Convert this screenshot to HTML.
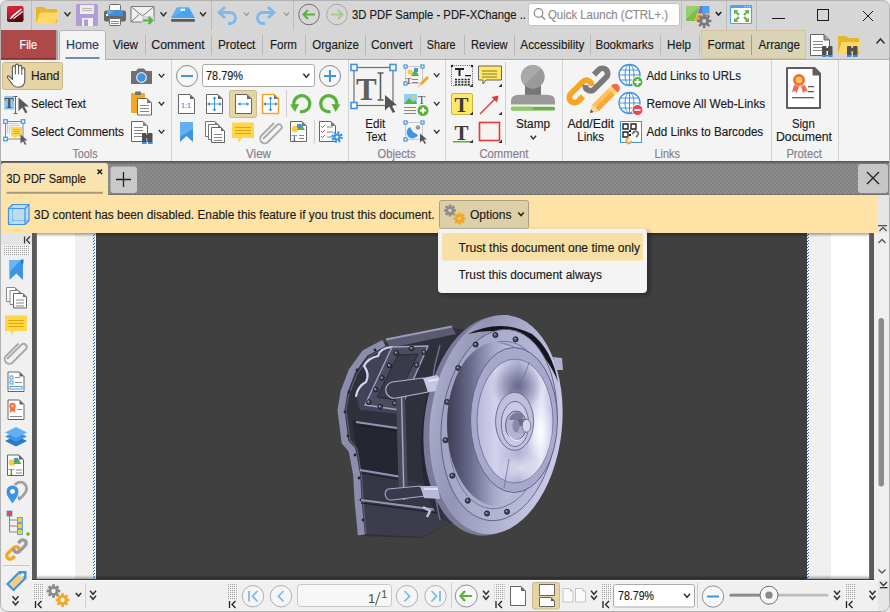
<!DOCTYPE html>
<html><head><meta charset="utf-8"><title>PDF-XChange</title>
<style>
*{margin:0;padding:0}
html,body{width:890px;height:612px;overflow:hidden;background:#d6d6d6}
svg{display:block}
text{font-family:"Liberation Sans",sans-serif;white-space:pre}
text.sf{font-family:"Liberation Serif",serif}
</style></head><body>
<svg width="890" height="612" viewBox="0 0 890 612">
<!-- titlebar -->
<rect x="0" y="0" width="890" height="60" fill="#d6d6d6" />
<rect x="0" y="0" width="890" height="1" fill="#c4c4c4"/>
<defs><linearGradient id="appg" x1="0" y1="0" x2="0.3" y2="1"><stop offset="0" stop-color="#d8283a"/><stop offset="0.45" stop-color="#a8141f"/><stop offset="1" stop-color="#4e070c"/></linearGradient></defs>
<rect x="7" y="6" width="16.5" height="16" fill="url(#appg)" rx="2" />
<path d="M7.5 6.5 H23 V9 L13 17 L7.5 20 Z" fill="#dc2a3a" opacity="0.6"/>
<path d="M10 19 L11.5 16 L21 8.5 L22 9.5 L12.8 17.2 Z" fill="#fff"/>
<path d="M13 18.2 L22.5 10.8 L23 12 L14 19 Z" fill="#fff" opacity="0.9"/>
<path d="M10 19.5 L11.5 16 L13 17.8 Z" fill="#fff"/>
<rect x="31" y="1" width="1" height="29" fill="#bdbdbd"/>
<path d="M36 7 h8 l2 2 h11 v14 h-21 z" fill="#e8b52b"/>
<path d="M36 23.5 L40 12.5 H59 L55 23.5 Z" fill="#ffd866"/>
<path d="M64.5 12.25 L67.5 15.75 L70.5 12.25" fill="none" stroke="#333" stroke-width="1.5"/>
<rect x="76" y="4" width="22" height="22" fill="#b39bd8" rx="1.5" />
<rect x="80" y="5" width="14" height="9" fill="#ececec" />
<rect x="82" y="8" width="10" height="1" fill="#b9b9b9"/>
<rect x="82" y="10" width="10" height="1" fill="#b9b9b9"/>
<rect x="82" y="18" width="11" height="8" fill="#f0f0f0" />
<rect x="84" y="19.5" width="4" height="6.5" fill="#b39bd8" />
<rect x="109.5" y="4.5" width="11" height="6" fill="#fafafa" rx="1" stroke="#6a6a6a" stroke-width="1" />
<rect x="104" y="10.5" width="22" height="11" fill="#686868" rx="2" />
<rect x="107" y="10.5" width="16" height="5.5" fill="#5aabf0" />
<path d="M107 16 L115 10.5 H123 V16 Z" fill="#3d8fe0"/>
<rect x="106" y="14" width="2" height="2" fill="#f0f0f0" />
<rect x="109.5" y="18.5" width="11" height="7" fill="#fafafa" rx="1" stroke="#6a6a6a" stroke-width="1" />
<rect x="111" y="21" width="8" height="1" fill="#4d9be6"/>
<rect x="111" y="23" width="8" height="1" fill="#4d9be6"/>
<rect x="131" y="6.5" width="23" height="15.5" fill="#f0f0f0" rx="1" stroke="#7a7a7a" stroke-width="1.1" />
<path d="M131.5 7 L142.5 16 L153.5 7 M131.5 21.5 L139 14.5" fill="none" stroke="#7a7a7a" stroke-width="1"/>
<rect x="142" y="16" width="12" height="7" fill="#d6d6d6" />
<path d="M143 20.5 h9 M148.5 17 l3.5 3.5 l-3.5 3.5" fill="none" stroke="#55b33b" stroke-width="2.2"/>
<path d="M160.5 12.25 L163.5 15.75 L166.5 12.25" fill="none" stroke="#333" stroke-width="1.5"/>
<path d="M171 18 L177 7.5 H189 L195 18 Z" fill="#4aa3ef"/>
<path d="M171 18 L177 7.5 H189 Z" fill="#5fb2f5"/>
<rect x="180.5" y="8.8" width="4.5" height="2" fill="#ffffff" />
<rect x="171" y="19" width="24" height="2.8" fill="#5a5a5a" rx="1.2" />
<path d="M200.0 12.25 L203 15.75 L206.0 12.25" fill="none" stroke="#333" stroke-width="1.5"/>
<rect x="211" y="1" width="1" height="29" fill="#bdbdbd"/>
<path d="M225 7 L219 12.5 L225 18 M219.5 12.5 H230 a5.5 5.5 0 0 1 0 11 h-2" fill="none" stroke="#7db9ea" stroke-width="2.8"/>
<path d="M244.0 12.5 L246.5 15.5 L249.0 12.5" fill="none" stroke="#9a9a9a" stroke-width="1.3"/>
<path d="M268 7 L274 12.5 L268 18 M273.5 12.5 H263 a5.5 5.5 0 0 0 0 11 h2" fill="none" stroke="#7db9ea" stroke-width="2.8"/>
<path d="M284.0 12.5 L286.5 15.5 L289.0 12.5" fill="none" stroke="#9a9a9a" stroke-width="1.3"/>
<rect x="293" y="1" width="1" height="29" fill="#bdbdbd"/>
<circle cx="309" cy="14.5" r="10.3" fill="none" stroke="#6f6f6f" stroke-width="1"/>
<path d="M303.5 14.5 H315 M308 10 L303.5 14.5 L308 19" fill="none" stroke="#5cb13a" stroke-width="2"/>
<circle cx="337" cy="14.5" r="10.3" fill="none" stroke="#a8a8a8" stroke-width="1"/>
<path d="M331 14.5 H342.5 M338 10 L342.5 14.5 L338 19" fill="none" stroke="#9fd08a" stroke-width="2"/>
<text x="352" y="19" font-size="12.5" fill="#1a1a1a" stroke="#1a1a1a" stroke-width="0.15" textLength="174" lengthAdjust="spacingAndGlyphs" >3D PDF Sample - PDF-XChange ..</text>
<rect x="528.5" y="3.5" width="151" height="22" fill="#ffffff" rx="2" stroke="#c2c2c2" stroke-width="1" />
<circle cx="538.5" cy="13" r="4.3" fill="none" stroke="#8a8a8a" stroke-width="1.2"/><path d="M541.5 16 L545 19.5" stroke="#8a8a8a" stroke-width="1.4"/>
<text x="548" y="19" font-size="12.5" fill="#8a8a8a" stroke="#8a8a8a" stroke-width="0.15" textLength="120" lengthAdjust="spacingAndGlyphs" >Quick Launch (CTRL+.)</text>
<rect x="681" y="1" width="1" height="29" fill="#bdbdbd"/>
<path d="M687.5 6 H700 L694.5 21 H687.5 Q686 21 686 19.5 V7.5 Q686 6 687.5 6 Z" fill="#7cc04a"/>
<path d="M687.5 6 H700 L686 19 V7.5 Q686 6 687.5 6 Z" fill="#98cf6e"/>
<path d="M700.5 6 H704.5 V13.5 H697.8 Z" fill="#8a5cc8"/>
<path d="M697.3 14.5 H704.5 V21 H694.8 Z" fill="#f5a623"/>
<rect x="702" y="6" width="7.5" height="7.5" fill="#4aa3ef" />
<rect x="703" y="14.5" width="6.5" height="1.5" fill="#f26b4a" />
<rect x="703" y="13.8" width="2.4" height="3.2" fill="#7a7a7a" transform="rotate(0 704.2 21)"/><rect x="703" y="13.8" width="2.4" height="3.2" fill="#7a7a7a" transform="rotate(45 704.2 21)"/><rect x="703" y="13.8" width="2.4" height="3.2" fill="#7a7a7a" transform="rotate(90 704.2 21)"/><rect x="703" y="13.8" width="2.4" height="3.2" fill="#7a7a7a" transform="rotate(135 704.2 21)"/><rect x="703" y="13.8" width="2.4" height="3.2" fill="#7a7a7a" transform="rotate(180 704.2 21)"/><rect x="703" y="13.8" width="2.4" height="3.2" fill="#7a7a7a" transform="rotate(225 704.2 21)"/><rect x="703" y="13.8" width="2.4" height="3.2" fill="#7a7a7a" transform="rotate(270 704.2 21)"/><rect x="703" y="13.8" width="2.4" height="3.2" fill="#7a7a7a" transform="rotate(315 704.2 21)"/><circle cx="704.2" cy="21" r="5" fill="#7a7a7a"/><circle cx="704.2" cy="21" r="2" fill="#d6d6d6"/>
<path d="M715.75 11.9 L718.5 15.1 L721.25 11.9" fill="none" stroke="#222" stroke-width="1.5"/>
<rect x="726" y="1" width="1" height="29" fill="#bdbdbd"/>
<rect x="730.5" y="5.5" width="21" height="18" fill="#ffffff" rx="1" stroke="#4aa3ef" stroke-width="1.2" />
<rect x="730.5" y="5.5" width="21" height="2.5" fill="#4aa3ef" />
<rect x="744.5" y="6.2" width="1" height="1" fill="#fff" />
<rect x="746.8" y="6.2" width="1" height="1" fill="#fff" />
<rect x="749.1" y="6.2" width="1" height="1" fill="#fff" />
<path d="M735 11 L739 15 M748 11 L744 15 M735 21 L739 17 M748 21 L744 17" stroke="#6ab04c" stroke-width="2.2"/>
<path d="M734 10 H738.5 L734 14.5 Z M749 10 H744.5 L749 14.5 Z M734 22 H738.5 L734 17.5 Z M749 22 H744.5 L749 17.5 Z" fill="#6ab04c"/>
<rect x="756" y="1" width="1" height="29" fill="#bdbdbd"/>
<rect x="772" y="18" width="13" height="1" fill="#1a1a1a"/>
<rect x="817.5" y="9.5" width="11" height="11" fill="none" stroke="#1a1a1a" stroke-width="1" />
<path d="M863 11 L873 21 M873 11 L863 21" stroke="#1a1a1a" stroke-width="1"/>
<!-- tabs -->
<rect x="1" y="30" width="55" height="30" fill="#ad4949" />
<rect x="1" y="58" width="55" height="1" fill="#8c2f2f"/>
<rect x="56" y="30" width="2" height="30" fill="#a6a6a6"/>
<text x="19.5" y="49" font-size="12.5" fill="#ffffff" stroke="#ffffff" stroke-width="0.15" textLength="17.5" lengthAdjust="spacingAndGlyphs" >File</text>
<rect x="106" y="59" width="784" height="1" fill="#ababab"/>
<path d="M59 61 V33 Q59 30 62 30 H103 Q106 30 106 33 V61 Z" fill="#f3f3f3"/>
<path d="M59.5 60 V33 Q59.5 30.5 62 30.5 H103 Q105.5 30.5 105.5 33 V60" fill="none" stroke="#b4b4b4" stroke-width="1"/>
<text x="66" y="49" font-size="12.5" fill="#1c3d6e" stroke="#1c3d6e" stroke-width="0.15" textLength="33" lengthAdjust="spacingAndGlyphs" >Home</text>
<rect x="65.5" y="57" width="34" height="2" fill="#6c8eb0" />
<text x="113" y="49" font-size="12.5" fill="#1a1a1a" stroke="#1a1a1a" stroke-width="0.15" textLength="25" lengthAdjust="spacingAndGlyphs" >View</text>
<text x="151.3" y="49" font-size="12.5" fill="#1a1a1a" stroke="#1a1a1a" stroke-width="0.15" textLength="53.4" lengthAdjust="spacingAndGlyphs" >Comment</text>
<text x="218" y="49" font-size="12.5" fill="#1a1a1a" stroke="#1a1a1a" stroke-width="0.15" textLength="37.4" lengthAdjust="spacingAndGlyphs" >Protect</text>
<text x="270" y="49" font-size="12.5" fill="#1a1a1a" stroke="#1a1a1a" stroke-width="0.15" textLength="27" lengthAdjust="spacingAndGlyphs" >Form</text>
<text x="312.3" y="49" font-size="12.5" fill="#1a1a1a" stroke="#1a1a1a" stroke-width="0.15" textLength="46.7" lengthAdjust="spacingAndGlyphs" >Organize</text>
<text x="371" y="49" font-size="12.5" fill="#1a1a1a" stroke="#1a1a1a" stroke-width="0.15" textLength="41.6" lengthAdjust="spacingAndGlyphs" >Convert</text>
<text x="426.8" y="49" font-size="12.5" fill="#1a1a1a" stroke="#1a1a1a" stroke-width="0.15" textLength="28.7" lengthAdjust="spacingAndGlyphs" >Share</text>
<text x="471" y="49" font-size="12.5" fill="#1a1a1a" stroke="#1a1a1a" stroke-width="0.15" textLength="36.7" lengthAdjust="spacingAndGlyphs" >Review</text>
<text x="520.3" y="49" font-size="12.5" fill="#1a1a1a" stroke="#1a1a1a" stroke-width="0.15" textLength="64.2" lengthAdjust="spacingAndGlyphs" >Accessibility</text>
<text x="595.4" y="49" font-size="12.5" fill="#1a1a1a" stroke="#1a1a1a" stroke-width="0.15" textLength="58.1" lengthAdjust="spacingAndGlyphs" >Bookmarks</text>
<text x="667" y="49" font-size="12.5" fill="#1a1a1a" stroke="#1a1a1a" stroke-width="0.15" textLength="24" lengthAdjust="spacingAndGlyphs" >Help</text>
<rect x="145" y="35" width="1" height="20" fill="#b9b9b9"/>
<rect x="211" y="35" width="1" height="20" fill="#b9b9b9"/>
<rect x="262" y="35" width="1" height="20" fill="#b9b9b9"/>
<rect x="305" y="35" width="1" height="20" fill="#b9b9b9"/>
<rect x="365" y="35" width="1" height="20" fill="#b9b9b9"/>
<rect x="420" y="35" width="1" height="20" fill="#b9b9b9"/>
<rect x="464" y="35" width="1" height="20" fill="#b9b9b9"/>
<rect x="514" y="35" width="1" height="20" fill="#b9b9b9"/>
<rect x="590" y="35" width="1" height="20" fill="#b9b9b9"/>
<rect x="660" y="35" width="1" height="20" fill="#b9b9b9"/>
<rect x="699" y="35" width="1" height="20" fill="#b9b9b9"/>
<rect x="701" y="30" width="105" height="29" fill="#dad3b6" />
<rect x="701.5" y="30.5" width="104" height="28" fill="none" stroke="#c8b98a" stroke-width="1" stroke-dasharray="1 1"/>
<text x="707.5" y="49" font-size="12.5" fill="#1a1a1a" stroke="#1a1a1a" stroke-width="0.15" textLength="37" lengthAdjust="spacingAndGlyphs" >Format</text>
<rect x="751" y="35" width="1" height="20" fill="#a59d84"/>
<text x="758.5" y="49" font-size="12.5" fill="#1a1a1a" stroke="#1a1a1a" stroke-width="0.15" textLength="41.5" lengthAdjust="spacingAndGlyphs" >Arrange</text>
<path d="M810.5 34.5 H824 L829.5 40 V55.5 H810.5 Z" fill="#fff" stroke="#666" stroke-width="1"/>
<path d="M824 34.5 V40 H829.5" fill="#999" stroke="#666"/>
<rect x="813" y="41" width="10" height="1" fill="#888"/>
<rect x="813" y="44" width="10" height="1" fill="#888"/>
<rect x="813" y="47" width="10" height="1" fill="#888"/>
<rect x="813" y="50" width="10" height="1" fill="#888"/>
<rect x="822" y="46" width="4.5" height="10" fill="#505050" rx="1" />
<rect x="828" y="46" width="4.5" height="10" fill="#505050" rx="1" />
<rect x="825" y="48" width="4" height="3" fill="#505050" />
<rect x="822" y="55" width="4.5" height="2" fill="#3b8fe0" />
<rect x="828" y="55" width="4.5" height="2" fill="#3b8fe0" />
<path d="M838 36 h8 l2 2 h11 v16 h-21 z" fill="#e8b52b"/>
<path d="M838 54 L841.5 42 H861 L857.5 54 Z" fill="#ffd866"/>
<rect x="847" y="46" width="4.5" height="10" fill="#505050" rx="1" />
<rect x="853" y="46" width="4.5" height="10" fill="#505050" rx="1" />
<rect x="850" y="48" width="4" height="3" fill="#505050" />
<rect x="847" y="55" width="4.5" height="2" fill="#3b8fe0" />
<rect x="853" y="55" width="4.5" height="2" fill="#3b8fe0" />
<path d="M876.5 43.5 L880.5 39 L884.5 43.5" fill="none" stroke="#333" stroke-width="1.5"/>
<!-- ribbon -->
<rect x="0" y="60" width="890" height="102" fill="#f4f4f4" />
<rect x="106" y="60" width="784" height="1" fill="#fafafa"/>
<rect x="0" y="60" width="1" height="102" fill="#c9c9c9"/>
<rect x="889" y="60" width="1" height="102" fill="#c9c9c9"/>
<rect x="171" y="60" width="1" height="102" fill="#d2d2d2"/>
<rect x="348" y="60" width="1" height="102" fill="#d2d2d2"/>
<rect x="445" y="60" width="1" height="102" fill="#d2d2d2"/>
<rect x="562" y="60" width="1" height="102" fill="#d2d2d2"/>
<rect x="771" y="60" width="1" height="102" fill="#d2d2d2"/>
<rect x="838" y="60" width="1" height="102" fill="#d2d2d2"/>
<rect x="0" y="161" width="890" height="1" fill="#5a5a5a"/>
<rect x="0" y="162" width="890" height="1" fill="#6a6a6a"/>
<rect x="2.5" y="62.5" width="60" height="27" fill="#e6d4a2" rx="2" stroke="#c9b88e" stroke-width="1" />
<path d="M12.5 79.5 L9.5 76.5 C8 75 6.5 76.5 7.8 78.2 L12.5 84.5 C14 86.5 15.5 87.3 18 87.3 C22.5 87.3 24.8 84.5 24.8 80 V69.5 C24.8 67.3 21.8 67.3 21.8 69.5 V67 C21.8 64.8 18.6 64.8 18.6 67 V65.8 C18.6 63.6 15.4 63.6 15.4 65.8 V67.5 C15.4 65.3 12.3 65.3 12.3 67.5 Z" fill="#fff" stroke="#5a5a5a" stroke-width="1.1" stroke-linejoin="round"/>
<path d="M15.4 67.5 V74.5 M18.6 67 V74.5 M21.8 69.5 V75" stroke="#5a5a5a" stroke-width="1"/>
<text x="31" y="80" font-size="12.5" fill="#1a1a1a" stroke="#1a1a1a" stroke-width="0.15" textLength="28.5" lengthAdjust="spacingAndGlyphs" >Hand</text>
<rect x="4.2" y="96" width="10" height="13.6" fill="#8cc4ef" rx="1.2" />
<text x="4.6" y="108" font-size="14" font-weight="bold" fill="#505050" class="sf">T</text>
<path d="M13.5 96.5 H17.5 M15.5 96.5 V113.5 M13.5 113.5 H17.5" stroke="#666" stroke-width="1"/>
<path transform="translate(18.5 97.5) scale(1.05)" d="M0 0 L0 13 L3.5 9.5 L6.5 15 L8.5 14 L5.5 8.5 L10 8.5 Z" fill="#5a5a5a"/>
<text x="31" y="108" font-size="12.5" fill="#1a1a1a" stroke="#1a1a1a" stroke-width="0.15" textLength="55" lengthAdjust="spacingAndGlyphs" >Select Text</text>
<rect x="5.5" y="121.5" width="17.5" height="17.5" fill="none" stroke="#8a8a8a" stroke-width="1" />
<path d="M7.5 133 V123.5 H18 M9.5 134 V125.5 H20" fill="none" stroke="#ffc928" stroke-width="0.9"/>
<path d="M11 127 H22 V136.5 H16.5 L14 139 V136.5 H11 Z" fill="#ffd54a"/><path d="M13 129.5 H20 M13 131.5 H20 M13 133.5 H20" stroke="#e0a800" stroke-width="0.7"/>
<rect x="3.75" y="119.75" width="3.5" height="3.5" fill="#fff" stroke="#3f93e6" stroke-width="1.2" />
<rect x="21.25" y="119.75" width="3.5" height="3.5" fill="#fff" stroke="#3f93e6" stroke-width="1.2" />
<rect x="3.75" y="137.25" width="3.5" height="3.5" fill="#fff" stroke="#3f93e6" stroke-width="1.2" />
<path transform="translate(20.5 134.5) scale(0.7)" d="M0 0 L0 13 L3.5 9.5 L6.5 15 L8.5 14 L5.5 8.5 L10 8.5 Z" fill="#5a5a5a"/>
<text x="31" y="136" font-size="12.5" fill="#1a1a1a" stroke="#1a1a1a" stroke-width="0.15" textLength="93" lengthAdjust="spacingAndGlyphs" >Select Comments</text>
<path d="M131 71 H136 L138 68.5 H144 L146 71 H152 V84 H131 Z" fill="#707070"/>
<circle cx="141.5" cy="77.5" r="4.8" fill="#3d93e6" stroke="#e8e8e8" stroke-width="1.2"/>
<path d="M158.75 73.9 L161.5 77.1 L164.25 73.9" fill="none" stroke="#333" stroke-width="1.4"/>
<rect x="131" y="93" width="14" height="20" fill="#f5a623" rx="1" />
<rect x="135" y="91.5" width="6" height="3.5" fill="#707070" rx="1" />
<path d="M137.5 98.5 H147 L151.5 103 V115.0 H137.5 Z" fill="#fff" stroke="#666" stroke-width="1" stroke-linejoin="round"/><path d="M147 98.5 L151.5 103 H147 Z" fill="#777"/>
<rect x="140" y="105" width="9" height="1" fill="#888"/>
<rect x="140" y="108" width="9" height="1" fill="#888"/>
<rect x="140" y="111" width="9" height="1" fill="#888"/>
<path d="M158.75 101.9 L161.5 105.1 L164.25 101.9" fill="none" stroke="#333" stroke-width="1.4"/>
<path d="M131.5 121.5 H143 L147.5 126 V141.5 H131.5 Z" fill="#fff" stroke="#666" stroke-width="1" stroke-linejoin="round"/><path d="M143 121.5 L147.5 126 H143 Z" fill="#888"/>
<rect x="134" y="127" width="9" height="1" fill="#888"/>
<rect x="134" y="130" width="9" height="1" fill="#888"/>
<rect x="134" y="133" width="9" height="1" fill="#888"/>
<rect x="134" y="136" width="9" height="1" fill="#888"/>
<rect x="142" y="133" width="4.5" height="10" fill="#505050" rx="1" />
<rect x="148" y="133" width="4.5" height="10" fill="#505050" rx="1" />
<rect x="145" y="135" width="4" height="3" fill="#505050" />
<rect x="142" y="142" width="4.5" height="2" fill="#3b8fe0" />
<rect x="148" y="142" width="4.5" height="2" fill="#3b8fe0" />
<path d="M158.75 129.9 L161.5 133.1 L164.25 129.9" fill="none" stroke="#333" stroke-width="1.4"/>
<text x="72.5" y="157.5" font-size="12" fill="#847d8c" stroke="#847d8c" stroke-width="0.15" textLength="25" lengthAdjust="spacingAndGlyphs" >Tools</text>
<circle cx="187" cy="76" r="10.5" fill="#f7f7f7" stroke="#8a8a8a" stroke-width="1"/>
<rect x="181" y="75" width="12" height="2" fill="#3d93e6"/>
<rect x="202.5" y="64.5" width="112" height="22" fill="#fff" rx="2" stroke="#a9a9a9" stroke-width="1" />
<text x="206" y="80" font-size="13" fill="#1a1a1a" stroke="#1a1a1a" stroke-width="0.15" textLength="37" lengthAdjust="spacingAndGlyphs" >78.79%</text>
<path d="M303.3 73.75 L306.3 77.25 L309.3 73.75" fill="none" stroke="#333" stroke-width="1.5"/>
<circle cx="330" cy="76" r="10.5" fill="#f7f7f7" stroke="#8a8a8a" stroke-width="1"/>
<rect x="324" y="75" width="12" height="2" fill="#3d93e6"/>
<rect x="329" y="70" width="2" height="12" fill="#3d93e6"/>
<path d="M178.5 94.5 H190 L194.5 99 V113.5 H178.5 Z" fill="#fff" stroke="#666" stroke-width="1" stroke-linejoin="round"/><path d="M190 94.5 L194.5 99 H190 Z" fill="#666"/>
<text x="181" y="108" font-size="8" fill="#3d93e6" stroke="#3d93e6" stroke-width="0.15" textLength="10" lengthAdjust="spacingAndGlyphs" >1:1</text>
<path d="M206.5 94.5 H218 L222.5 99 V113.5 H206.5 Z" fill="#fff" stroke="#666" stroke-width="1" stroke-linejoin="round"/><path d="M218 94.5 L222.5 99 H218 Z" fill="#666"/>
<path d="M214.5 97 V111 M207.5 104 H221.5" stroke="#3d93e6" stroke-width="1"/><path d="M212.5 99 L214.5 96.5 L216.5 99 Z M212.5 109 L214.5 111.5 L216.5 109 Z M210 102 L207.5 104 L210 106 Z M219 102 L221.5 104 L219 106 Z" fill="#3d93e6"/>
<rect x="229.5" y="90.5" width="27" height="27" fill="#e6d4a2" rx="2" stroke="#cbbb92" stroke-width="1" />
<path d="M235.5 94.5 H247 L251.5 99 V113.5 H235.5 Z" fill="#fff" stroke="#666" stroke-width="1" stroke-linejoin="round"/><path d="M247 94.5 L251.5 99 H247 Z" fill="#666"/>
<path d="M238 104 H249" stroke="#3d93e6" stroke-width="1"/><path d="M240.5 102 L238 104 L240.5 106 Z M246.5 102 L249 104 L246.5 106 Z" fill="#3d93e6"/>
<path d="M262.5 94.5 H274 L278.5 99 V113.5 H262.5 Z" fill="#fff" stroke="#f5a623" stroke-width="1.6" stroke-linejoin="round"/><path d="M274 94.5 L278.5 99 H274 Z" fill="#777"/>
<path d="M270.5 97 V111 M263.5 104 H277.5" stroke="#3d93e6" stroke-width="1"/><path d="M268.5 99 L270.5 96.5 L272.5 99 Z M268.5 109 L270.5 111.5 L272.5 109 Z M266 102 L263.5 104 L266 106 Z M275 102 L277.5 104 L275 106 Z" fill="#3d93e6"/>
<rect x="286" y="90" width="1" height="27" fill="#cfcfcf"/>
<path d="M294.5 107 A8 8 0 1 1 300 111.5" fill="none" stroke="#5cb13a" stroke-width="3.2"/><path d="M290 104.5 L295 112 L299 104 Z" fill="#5cb13a"/>
<path d="M336 107 A8 8 0 1 0 330.5 111.5" fill="none" stroke="#5cb13a" stroke-width="3.2"/><path d="M340.5 104.5 L335.5 112 L331.5 104 Z" fill="#5cb13a"/>
<path d="M180 122 H193 V142 L186.5 136 L180 142 Z" fill="#3d93e6"/><path d="M180 122 H193 V129 L180 137 Z" fill="#62b0f2"/>
<path d="M205.5 121.5 H215 L218.5 125 V136.5 H205.5 Z" fill="#fff" stroke="#777" stroke-width="1" stroke-linejoin="round"/><path d="M215 121.5 L218.5 125 H215 Z" fill="#777"/>
<path d="M208.5 124.5 H218 L221.5 128 V139.5 H208.5 Z" fill="#fff" stroke="#777" stroke-width="1" stroke-linejoin="round"/><path d="M218 124.5 L221.5 128 H218 Z" fill="#777"/>
<path d="M211.5 127.5 H221 L224.5 131 V142.5 H211.5 Z" fill="#fff" stroke="#666" stroke-width="1" stroke-linejoin="round"/><path d="M221 127.5 L224.5 131 H221 Z" fill="#666"/>
<rect x="214" y="134" width="8" height="1" fill="#888"/>
<rect x="214" y="137" width="8" height="1" fill="#888"/>
<rect x="214" y="140" width="8" height="1" fill="#888"/>
<path d="M232 122.5 H254 V138 H242 L238.5 143 V138 H232 Z" fill="#ffd54a"/>
<rect x="235" y="127" width="16" height="1" fill="#e0a800"/>
<rect x="235" y="130" width="16" height="1" fill="#e0a800"/>
<rect x="235" y="133" width="16" height="1" fill="#e0a800"/>
<path d="M263 139 L277.5 124.5 A3 3 0 0 1 281.5 128.5 L268 142 A4.5 4.5 0 0 1 261.5 135.5 L274 123" fill="none" stroke="#a9a9a9" stroke-width="1.8"/>
<path d="M290.5 121.5 H302 L306.5 126 V141.5 H290.5 Z" fill="#fff" stroke="#666" stroke-width="1" stroke-linejoin="round"/><path d="M302 121.5 L306.5 126 H302 Z" fill="#777"/>
<circle cx="295" cy="129" r="3.2" fill="#fbc93d"/><path d="M297 130 L301 123.5 L305 130 Z" fill="#5cb13a"/><rect x="297" y="124" width="4" height="4" fill="#3d93e6"/>
<text x="291.5" y="140.5" font-size="9" fill="#333" class="sf">T</text>
<rect x="299" y="135" width="5" height="1" fill="#888"/>
<rect x="299" y="138" width="5" height="1" fill="#888"/>
<rect x="314" y="120" width="1" height="24" fill="#cfcfcf"/>
<path d="M319.5 121.5 H331 L335.5 126 V141.5 H319.5 Z" fill="#fff" stroke="#666" stroke-width="1" stroke-linejoin="round"/><path d="M331 121.5 L335.5 126 H331 Z" fill="#777"/>
<path d="M321 126 l1.5 1.5 l2.5 -2.5 M321 131 l1.5 1.5 l2.5 -2.5 M321 136 l1.5 1.5 l2.5 -2.5" stroke="#e8484a" stroke-width="1" fill="none"/>
<rect x="327" y="126.5" width="6" height="1" fill="#888"/>
<rect x="327" y="131.5" width="6" height="1" fill="#888"/>
<rect x="327" y="136.5" width="6" height="1" fill="#888"/>
<circle cx="337" cy="137" r="4.5" fill="none" stroke="#3d93e6" stroke-width="2.6" stroke-dasharray="2 1.5"/><circle cx="337" cy="137" r="3.6" fill="#3d93e6"/><circle cx="337" cy="137" r="1.5" fill="#f3f3f3"/>
<text x="246" y="157.5" font-size="12" fill="#847d8c" stroke="#847d8c" stroke-width="0.15" textLength="25" lengthAdjust="spacingAndGlyphs" >View</text>
<rect x="354" y="67.5" width="39" height="38" fill="none" stroke="#6f6f6f" stroke-width="1.2" />
<rect x="351" y="64.5" width="6" height="6" fill="#fff" stroke="#3f93e6" stroke-width="1.6" />
<rect x="390" y="64.5" width="6" height="6" fill="#fff" stroke="#3f93e6" stroke-width="1.6" />
<rect x="351" y="102.5" width="6" height="6" fill="#fff" stroke="#3f93e6" stroke-width="1.6" />
<text x="356" y="99.5" font-size="31" font-weight="bold" fill="#5f5f5f" class="sf">T</text>
<path d="M377.5 73 H383.5 M380.5 73 V100 M377.5 100 H383.5" stroke="#5f5f5f" stroke-width="1.6"/>
<path transform="translate(385 95) scale(1.2)" d="M0 0 L0 13 L3.5 9.5 L6.5 15 L8.5 14 L5.5 8.5 L10 8.5 Z" fill="#555"/>
<text x="365.3" y="128" font-size="12.5" fill="#1a1a1a" stroke="#1a1a1a" stroke-width="0.15" textLength="20" lengthAdjust="spacingAndGlyphs" >Edit</text>
<text x="366" y="140.5" font-size="12.5" fill="#1a1a1a" stroke="#1a1a1a" stroke-width="0.15" textLength="20" lengthAdjust="spacingAndGlyphs" >Text</text>
<rect x="405.5" y="66.5" width="17" height="17" fill="none" stroke="#888" stroke-width="0.8" stroke-dasharray="1 1"/>
<circle cx="410" cy="72" r="2.5" fill="#fbc93d"/><path d="M411 76 L415 69 L419 76 Z" fill="#5cb13a"/><rect x="414" y="68" width="4" height="4" fill="#3d93e6"/>
<text x="406" y="84" font-size="9" fill="#333" class="sf">T</text>
<rect x="412" y="79" width="6" height="1" fill="#888"/>
<rect x="412" y="82" width="6" height="1" fill="#888"/>
<path d="M418 88 L420 83 L427 76 L429 78 L422 85 Z" fill="#f5a623"/><path d="M418 88 L420 83 L422 85 Z" fill="#f3d9a8"/>
<rect x="404.0" y="65.0" width="3" height="3" fill="#fff" stroke="#3f93e6" stroke-width="1.2" />
<rect x="421.0" y="65.0" width="3" height="3" fill="#fff" stroke="#3f93e6" stroke-width="1.2" />
<rect x="404.0" y="82.0" width="3" height="3" fill="#fff" stroke="#3f93e6" stroke-width="1.2" />
<path d="M433.95 73.4 L436.7 76.6 L439.45 73.4" fill="none" stroke="#333" stroke-width="1.4"/>
<rect x="404" y="94" width="13" height="10" fill="#8fd1f5" />
<path d="M404 104 L409 98 L413 102 L415 100 L417 104 Z" fill="#5cb13a"/><circle cx="414" cy="96.5" r="1.5" fill="#fbc93d"/>
<text x="418" y="104" font-size="12" fill="#555" class="sf">T</text>
<rect x="404" y="107" width="12" height="1" fill="#888"/>
<rect x="404" y="110" width="12" height="1" fill="#888"/>
<rect x="404" y="113" width="12" height="1" fill="#888"/>
<circle cx="423" cy="110.5" r="5.5" fill="#5cb13a"/><path d="M420 110.5 H426 M423 107.5 V113.5" stroke="#fff" stroke-width="1.8"/>
<path d="M433.95 101.9 L436.7 105.1 L439.45 101.9" fill="none" stroke="#333" stroke-width="1.4"/>
<rect x="405.5" y="122.5" width="17" height="17" fill="none" stroke="#888" stroke-width="0.8" stroke-dasharray="1 1"/>
<path d="M410 127 A6 6 0 1 0 418 135 L413 132 Z" fill="#3d93e6"/><circle cx="418" cy="127.5" r="2.3" fill="#999"/>
<rect x="404.0" y="121.0" width="3" height="3" fill="#fff" stroke="#3f93e6" stroke-width="1.2" />
<rect x="421.0" y="121.0" width="3" height="3" fill="#fff" stroke="#3f93e6" stroke-width="1.2" />
<rect x="404.0" y="138.0" width="3" height="3" fill="#fff" stroke="#3f93e6" stroke-width="1.2" />
<path transform="translate(420 133.5) scale(0.7)" d="M0 0 L0 13 L3.5 9.5 L6.5 15 L8.5 14 L5.5 8.5 L10 8.5 Z" fill="#555"/>
<path d="M433.95 129.9 L436.7 133.1 L439.45 129.9" fill="none" stroke="#333" stroke-width="1.4"/>
<text x="377.6" y="157.5" font-size="12" fill="#847d8c" stroke="#847d8c" stroke-width="0.15" textLength="38" lengthAdjust="spacingAndGlyphs" >Objects</text>
<rect x="451.5" y="65.5" width="21" height="20" fill="none" stroke="#333" stroke-width="0.8" stroke-dasharray="1 1.2"/>
<path d="M455 69 H464 M459.5 69 V76" stroke="#222" stroke-width="2"/>
<rect x="465" y="75" width="6" height="1.3" fill="#222"/>
<path d="M455 79.5 H470 M455 82 H470 M455 84.5 H470" stroke="#222" stroke-width="1.6" stroke-dasharray="2 1.2"/>
<circle cx="452" cy="66" r="1.2" fill="#222"/>
<circle cx="472" cy="66" r="1.2" fill="#222"/>
<path d="M478.5 66 H501.5 V80 H486 L483 84 V80 H478.5 Z" fill="#ffe866" stroke="#555" stroke-width="0.9" stroke-linejoin="round"/>
<rect x="482" y="70.5" width="15" height="1" fill="#8a7a20"/>
<rect x="482" y="73.5" width="15" height="1" fill="#8a7a20"/>
<rect x="482" y="76.5" width="15" height="1" fill="#8a7a20"/>
<rect x="451.5" y="93.5" width="21" height="21" fill="#ffe866" rx="1.5" stroke="#c9b54a" stroke-width="1" />
<text x="454.5" y="112" font-size="21" font-weight="bold" fill="#3c3c3c" class="sf">T</text>
<path d="M480 114 L497 97" stroke="#e53935" stroke-width="1.4"/><path d="M498.5 95.5 L491.5 97 L497 102.5 Z" fill="#e53935"/>
<text x="454.5" y="139.5" font-size="21" font-weight="bold" fill="#3c3c3c" class="sf">T</text>
<rect x="453" y="141" width="18" height="1.5" fill="#5cb13a"/>
<rect x="479.5" y="122.5" width="20" height="18" fill="none" stroke="#e53935" stroke-width="1.6" />
<path d="M473 87 h-3.5 l3.5 -3.5 Z" fill="#333"/>
<path d="M502 87 h-3.5 l3.5 -3.5 Z" fill="#333"/>
<path d="M473 115 h-3.5 l3.5 -3.5 Z" fill="#333"/>
<path d="M502 115 h-3.5 l3.5 -3.5 Z" fill="#333"/>
<path d="M473 143 h-3.5 l3.5 -3.5 Z" fill="#333"/>
<path d="M502 143 h-3.5 l3.5 -3.5 Z" fill="#333"/>
<rect x="505" y="62" width="1" height="83" fill="#cfcfcf"/>
<rect x="525" y="84" width="16" height="11" fill="#767676" />
<circle cx="532.8" cy="76.8" r="11.9" fill="#9a9a9a"/><path d="M541.2 68.4 A11.9 11.9 0 0 0 524.4 85.2 Z" fill="#a9a9a9"/>
<path d="M511 104.6 V101 Q511 94.8 519 94.8 H547 Q555 94.8 555 101 V104.6 Z" fill="#9a9a9a"/>
<rect x="511" y="106.8" width="44" height="3.6" fill="#6ab04c" rx="1.5" />
<rect x="511" y="106.8" width="22" height="3.6" fill="#90c96a" rx="1.5" />
<text x="516" y="128" font-size="12.5" fill="#1a1a1a" stroke="#1a1a1a" stroke-width="0.15" textLength="34" lengthAdjust="spacingAndGlyphs" >Stamp</text>
<path d="M530.55 135.70000000000002 L533.3 138.9 L536.05 135.70000000000002" fill="none" stroke="#333" stroke-width="1.4"/>
<text x="479.4" y="157.5" font-size="12" fill="#847d8c" stroke="#847d8c" stroke-width="0.15" textLength="49" lengthAdjust="spacingAndGlyphs" >Comment</text>
<path d="M582.98 96.38 L578.18 101.18 A5.2 5.2 0 0 1 570.82 93.82 L582.82 81.82 A5.2 5.2 0 0 1 591.68 85.95" fill="none" stroke="#f5a623" stroke-width="5.8" stroke-linecap="butt"/>
<path d="M594.02 74.62 L598.82 69.82 A5.2 5.2 0 0 1 606.18 77.18 L594.18 89.18 A5.2 5.2 0 0 1 585.32 85.05" fill="none" stroke="#7a7a7a" stroke-width="5.8" stroke-linecap="butt"/>
<path d="M590 113 L592.5 104.5 L608.5 88.5 L615 95 L599 111 Z" fill="#f8a93a"/><path d="M592.5 104.5 L608.5 88.5 L611.5 91.5 L595.5 107.5 Z" fill="#ffc060"/><path d="M608.5 88.5 L611 86 L617.5 92.5 L615 95 Z" fill="#ffd866"/><path d="M611 86 L612 85 A3.4 3.4 0 0 1 618.5 91.5 L617.5 92.5 Z" fill="#f26b4a"/><path d="M590 113 L592.5 104.5 L599 111 Z" fill="#f3d9a8"/><path d="M590 113 L591 109.5 L593.5 112 Z" fill="#555"/>
<text x="567.4" y="128" font-size="12.5" fill="#1a1a1a" stroke="#1a1a1a" stroke-width="0.15" textLength="46.5" lengthAdjust="spacingAndGlyphs" >Add/Edit</text>
<text x="577.3" y="140.5" font-size="12.5" fill="#1a1a1a" stroke="#1a1a1a" stroke-width="0.15" textLength="26.7" lengthAdjust="spacingAndGlyphs" >Links</text>
<circle cx="629.5" cy="75" r="10.5" fill="#fff" stroke="#3d93e6" stroke-width="1.3"/><ellipse cx="629.5" cy="75" rx="4.5" ry="10.5" fill="none" stroke="#3d93e6" stroke-width="1"/><path d="M619.0 75 H640.0 M620.5 70 H638.5 M620.5 80 H638.5 M629.5 64.5 V85.5" stroke="#3d93e6" stroke-width="1"/>
<circle cx="637.5" cy="82" r="5.5" fill="#5cb13a" stroke="#fff" stroke-width="1"/><path d="M634.5 82 H640.5 M637.5 79 V85" stroke="#fff" stroke-width="1.8"/>
<text x="646.5" y="80" font-size="12.5" fill="#1a1a1a" stroke="#1a1a1a" stroke-width="0.15" textLength="94.5" lengthAdjust="spacingAndGlyphs" >Add Links to URLs</text>
<circle cx="629.5" cy="103" r="10.5" fill="#fff" stroke="#3d93e6" stroke-width="1.3"/><ellipse cx="629.5" cy="103" rx="4.5" ry="10.5" fill="none" stroke="#3d93e6" stroke-width="1"/><path d="M619.0 103 H640.0 M620.5 98 H638.5 M620.5 108 H638.5 M629.5 92.5 V113.5" stroke="#3d93e6" stroke-width="1"/>
<circle cx="637.5" cy="110" r="5.5" fill="#e8484a" stroke="#fff" stroke-width="1"/><path d="M634.5 110 H640.5" stroke="#fff" stroke-width="1.8"/>
<text x="646.5" y="108" font-size="12.5" fill="#1a1a1a" stroke="#1a1a1a" stroke-width="0.15" textLength="118.7" lengthAdjust="spacingAndGlyphs" >Remove All Web-Links</text>
<rect x="620.5" y="121.5" width="21" height="21" fill="#fff" stroke="#3d93e6" stroke-width="1" />
<path d="M623 124 h5 v5 h-5 z M631 124 h5 v5 h-5 z M623 132 h5 v5 h-5 z" fill="none" stroke="#222" stroke-width="1.4"/><path d="M629 130 h2 v2 h-2z M633 131 h2 v2 h-2z M629 134 h2 v2h-2z" fill="#222"/>
<path d="M632 141 L630.5 142.5 A2.3 2.3 0 0 1 627 139 L629 137" fill="none" stroke="#f5a623" stroke-width="1.8"/><path d="M636 137 L637.5 135.5 A2.3 2.3 0 0 0 634 132 L632 134" fill="none" stroke="#7a7a7a" stroke-width="1.8"/>
<text x="646.5" y="136" font-size="12.5" fill="#1a1a1a" stroke="#1a1a1a" stroke-width="0.15" textLength="116.7" lengthAdjust="spacingAndGlyphs" >Add Links to Barcodes</text>
<text x="654.4" y="157.5" font-size="12" fill="#847d8c" stroke="#847d8c" stroke-width="0.15" textLength="25.5" lengthAdjust="spacingAndGlyphs" >Links</text>
<path d="M787 68 H813 L820 75 V108 H787 Z" fill="#fff" stroke="#5f5f5f" stroke-width="2" stroke-linejoin="round"/>
<path d="M812 67 L821 76 V73 L815 67 Z" fill="#5f5f5f"/><path d="M812.5 67.5 L820.5 75.5 H812.5 Z" fill="#5f5f5f"/>
<path d="M794 85 L792 92 L795 91 L797 93 L799 86 Z M801 86 L803 93 L805 91 L808 92 L805 85 Z" fill="#f26b4a"/>
<circle cx="799" cy="80" r="6" fill="#f26b4a"/><circle cx="799" cy="80" r="3.3" fill="#fbc93d"/>
<rect x="808" y="86" width="6" height="1.3" fill="#5f5f5f"/>
<rect x="808" y="91" width="6" height="1.3" fill="#5f5f5f"/>
<rect x="792" y="97" width="22" height="1.3" fill="#5f5f5f"/>
<text x="792" y="128" font-size="12.5" fill="#1a1a1a" stroke="#1a1a1a" stroke-width="0.15" textLength="22.7" lengthAdjust="spacingAndGlyphs" >Sign</text>
<text x="776" y="140.5" font-size="12.5" fill="#1a1a1a" stroke="#1a1a1a" stroke-width="0.15" textLength="56" lengthAdjust="spacingAndGlyphs" >Document</text>
<text x="786.4" y="157.5" font-size="12" fill="#847d8c" stroke="#847d8c" stroke-width="0.15" textLength="35.5" lengthAdjust="spacingAndGlyphs" >Protect</text>
<!-- doc -->
<defs><pattern id="chk" width="4" height="4" patternUnits="userSpaceOnUse"><rect width="4" height="4" fill="#838383"/><rect width="2" height="2" fill="#8c8c8c"/><rect x="2" y="2" width="2" height="2" fill="#8c8c8c"/></pattern><linearGradient id="tabg" x1="0" y1="0" x2="0" y2="1"><stop offset="0" stop-color="#f6e3b8"/><stop offset="1" stop-color="#fde3aa"/></linearGradient><linearGradient id="shadowTop" x1="0" y1="0" x2="0" y2="1"><stop offset="0" stop-color="#000" stop-opacity="0.35"/><stop offset="1" stop-color="#000" stop-opacity="0"/></linearGradient><pattern id="dotb" width="3" height="3" patternUnits="userSpaceOnUse"><rect width="3" height="3" fill="#e9f1fa"/><rect x="1" y="0" width="1" height="1" fill="#1f74d2"/><rect x="0" y="1" width="1" height="1" fill="#1f74d2"/><rect x="2" width="1" height="3" fill="#f3f6f9"/></pattern><pattern id="grip" width="2" height="2" patternUnits="userSpaceOnUse"><rect x="0" y="0" width="1" height="1" fill="#a2a2a2"/><rect x="1" y="1" width="1" height="1" fill="#fdfdfd"/></pattern></defs>
<rect x="0" y="163" width="890" height="32" fill="url(#chk)" />
<rect x="0" y="163" width="890" height="1" fill="#767676"/>
<rect x="0" y="194" width="890" height="1" fill="#727272"/>
<path d="M1 195 V166 Q1 163 4 163 H105 Q108 163 108 166 V195 Z" fill="url(#tabg)"/>
<text x="6.4" y="183" font-size="12.5" fill="#1a1a1a" stroke="#1a1a1a" stroke-width="0.15" textLength="79.6" lengthAdjust="spacingAndGlyphs" >3D PDF Sample</text>
<path d="M97.5 169.5 L102 174 M102 169.5 L97.5 174" stroke="#111" stroke-width="1.4"/>
<rect x="6.4" y="191.8" width="96.4" height="2" fill="#a99a7c" />
<rect x="110.5" y="166.5" width="26.5" height="26.5" fill="#c9c9c9" rx="3" />
<path d="M116 179.5 H131 M123.5 172 V187" stroke="#222" stroke-width="1.3"/>
<rect x="858" y="164" width="30" height="29" fill="#c6c6c6" rx="3" />
<path d="M867 172 L879 184 M879 172 L867 184" stroke="#222" stroke-width="1.4"/>
<rect x="0" y="195" width="878" height="38" fill="#ffe3a6" />
<rect x="878" y="195" width="12" height="38" fill="#e6e6e6" />
<rect x="0" y="195" width="1" height="417" fill="#c3c3c3"/>
<rect x="889" y="163" width="1" height="449" fill="#c3c3c3"/>
<path d="M8.5 208.5 L12.5 204.5 H29 V220.5 L25 224.5 H8.5 Z" fill="#bcdcee" stroke="#3d93e6" stroke-width="1.2" stroke-linejoin="round"/>
<path d="M8.5 208.5 H25 V224.5 M25 208.5 L29 204.5" fill="none" stroke="#3d93e6" stroke-width="1.2"/>
<path d="M12.5 204.5 V220.5 H29 M12.5 220.5 L8.5 224.5" fill="none" stroke="#3d93e6" stroke-width="0.8" stroke-dasharray="1.5 1.2"/>
<text x="34.1" y="219.3" font-size="12.5" fill="#1a1a1a" stroke="#1a1a1a" stroke-width="0.15" textLength="400.4" lengthAdjust="spacingAndGlyphs" >3D content has been disabled. Enable this feature if you trust this document.</text>
<rect x="439.5" y="200.5" width="89" height="28" fill="#ddd0a6" rx="2" stroke="#a89f86" stroke-width="1" />
<rect x="448.7" y="204.5" width="2.6" height="3.2" fill="#8d8d8d" transform="rotate(0 450 210.5)"/><rect x="448.7" y="204.5" width="2.6" height="3.2" fill="#8d8d8d" transform="rotate(45 450 210.5)"/><rect x="448.7" y="204.5" width="2.6" height="3.2" fill="#8d8d8d" transform="rotate(90 450 210.5)"/><rect x="448.7" y="204.5" width="2.6" height="3.2" fill="#8d8d8d" transform="rotate(135 450 210.5)"/><rect x="448.7" y="204.5" width="2.6" height="3.2" fill="#8d8d8d" transform="rotate(180 450 210.5)"/><rect x="448.7" y="204.5" width="2.6" height="3.2" fill="#8d8d8d" transform="rotate(225 450 210.5)"/><rect x="448.7" y="204.5" width="2.6" height="3.2" fill="#8d8d8d" transform="rotate(270 450 210.5)"/><rect x="448.7" y="204.5" width="2.6" height="3.2" fill="#8d8d8d" transform="rotate(315 450 210.5)"/><circle cx="450" cy="210.5" r="4.2" fill="#8d8d8d"/><circle cx="450" cy="210.5" r="1.8" fill="#ddd0a6"/>
<rect x="458.2" y="212.5" width="2.6" height="3.2" fill="#f5a623" transform="rotate(0 459.5 218.5)"/><rect x="458.2" y="212.5" width="2.6" height="3.2" fill="#f5a623" transform="rotate(45 459.5 218.5)"/><rect x="458.2" y="212.5" width="2.6" height="3.2" fill="#f5a623" transform="rotate(90 459.5 218.5)"/><rect x="458.2" y="212.5" width="2.6" height="3.2" fill="#f5a623" transform="rotate(135 459.5 218.5)"/><rect x="458.2" y="212.5" width="2.6" height="3.2" fill="#f5a623" transform="rotate(180 459.5 218.5)"/><rect x="458.2" y="212.5" width="2.6" height="3.2" fill="#f5a623" transform="rotate(225 459.5 218.5)"/><rect x="458.2" y="212.5" width="2.6" height="3.2" fill="#f5a623" transform="rotate(270 459.5 218.5)"/><rect x="458.2" y="212.5" width="2.6" height="3.2" fill="#f5a623" transform="rotate(315 459.5 218.5)"/><circle cx="459.5" cy="218.5" r="4.2" fill="#f5a623"/><circle cx="459.5" cy="218.5" r="1.8" fill="#ddd0a6"/>
<text x="470" y="219.3" font-size="12.5" fill="#1a1a1a" stroke="#1a1a1a" stroke-width="0.15" textLength="41.5" lengthAdjust="spacingAndGlyphs" >Options</text>
<path d="M518.25 212.4 L521 215.6 L523.75 212.4" fill="none" stroke="#222" stroke-width="1.5"/>
<rect x="878" y="225" width="9" height="1.3" fill="#555" />
<path d="M879.5 231 L883 227.5 L886.5 231" fill="none" stroke="#555" stroke-width="1.3"/>
<rect x="1" y="233" width="31" height="379" fill="#f0f0f0" />
<rect x="32" y="233" width="5" height="347" fill="#5a5a5a" />
<rect x="36" y="233" width="1" height="347" fill="#6e6e6e"/>
<rect x="37" y="233" width="38" height="347" fill="#ffffff" />
<rect x="75" y="233" width="18" height="347" fill="#f0f0f0" />
<rect x="93" y="233" width="3" height="347" fill="url(#dotb)" />
<rect x="96" y="233" width="711" height="347" fill="#404040" />
<rect x="807" y="233" width="3" height="347" fill="url(#dotb)" />
<rect x="810" y="233" width="21" height="347" fill="#f0f0f0" />
<rect x="831" y="233" width="38" height="347" fill="#ffffff" />
<rect x="869" y="233" width="5" height="347" fill="#5a5a5a" />
<rect x="869" y="233" width="1" height="347" fill="#6e6e6e"/>
<rect x="874" y="233" width="15" height="347" fill="#efefef" />
<rect x="37" y="233" width="832" height="4" fill="url(#shadowTop)" />
<rect x="37" y="575" width="832" height="4" fill="url(#shadowTop)" transform="rotate(180 453 577)"/>
<rect x="32" y="579" width="842" height="1" fill="#3a3a3a"/>
<path d="M878.5 243 L882 239.5 L885.5 243" fill="none" stroke="#555" stroke-width="1.3"/>
<rect x="878.5" y="318" width="5.5" height="168.5" fill="#8c8c8c" rx="2.7" />
<path d="M878.5 569.5 L882 573 L885.5 569.5" fill="none" stroke="#555" stroke-width="1.3"/>
<rect x="1" y="233" width="31" height="12" fill="#e4e4e4" />
<path d="M24.5 236.5 V243.5 M30 236.5 L26.5 240 L30 243.5" fill="none" stroke="#333" stroke-width="1.2"/>
<rect x="4" y="246" width="26" height="10" fill="url(#grip)" />
<path d="M9.5 260 H23 V280 L16.3 273.5 L9.5 280 Z" fill="#3d93e6"/><path d="M9.5 260 H21 L9.5 272 Z" fill="#6cb6f3"/><rect x="21" y="259.5" width="2.5" height="4" fill="#2a77c4"/>
<path d="M6.5 287.5 H15 L18.5 291 V301.5 H6.5 Z" fill="#fff" stroke="#8a8a8a" stroke-width="1" stroke-linejoin="round"/><path d="M15 287.5 L18.5 291 H15 Z" fill="#8a8a8a"/>
<path d="M10.0 290.5 H18.5 L22.0 294 V304.5 H10.0 Z" fill="#fff" stroke="#8a8a8a" stroke-width="1" stroke-linejoin="round"/><path d="M18.5 290.5 L22.0 294 H18.5 Z" fill="#8a8a8a"/>
<path d="M13.5 293.5 H23 L26.5 297 V308.0 H13.5 Z" fill="#fff" stroke="#666" stroke-width="1" stroke-linejoin="round"/><path d="M23 293.5 L26.5 297 H23 Z" fill="#666"/>
<rect x="16" y="299.5" width="8" height="1" fill="#888"/>
<rect x="16" y="302.5" width="8" height="1" fill="#888"/>
<rect x="16" y="305.5" width="8" height="1" fill="#888"/>
<path d="M5 315.5 H27 V331 H14 L11 336 V331 H5 Z" fill="#ffd54a"/>
<rect x="8.5" y="320" width="15.0" height="1" fill="#e0a800"/>
<rect x="8.5" y="323" width="15.0" height="1" fill="#e0a800"/>
<rect x="8.5" y="326" width="15.0" height="1" fill="#e0a800"/>
<path d="M7 358 L21.5 343.5 A3.2 3.2 0 0 1 26 348 L12.5 361.5 A4.5 4.5 0 0 1 6 355 L18.5 342.5" fill="none" stroke="#a9a9a9" stroke-width="1.9" transform="translate(0 1)"/>
<path d="M8.0 372.0 H19.5 L24.0 376.5 V391.5 H8.0 Z" fill="#fff" stroke="#666" stroke-width="1" stroke-linejoin="round"/><path d="M19.5 372.0 L24.0 376.5 H19.5 Z" fill="#666"/>
<rect x="10" y="376" width="3" height="3" fill="none" stroke="#3d93e6" stroke-width="0.9" />
<rect x="10" y="381" width="3" height="3" fill="none" stroke="#3d93e6" stroke-width="0.9" />
<rect x="15" y="377" width="5" height="1" fill="#888"/>
<rect x="15" y="382" width="7" height="1" fill="#888"/>
<rect x="10" y="386.5" width="12" height="2.5" fill="none" stroke="#3d93e6" stroke-width="0.9" />
<path d="M8.0 400.0 H19.5 L24.0 404.5 V419.5 H8.0 Z" fill="#fff" stroke="#666" stroke-width="1" stroke-linejoin="round"/><path d="M19.5 400.0 L24.0 404.5 H19.5 Z" fill="#666"/>
<circle cx="12.5" cy="406" r="3.2" fill="#f26b4a"/><circle cx="12.5" cy="406" r="1.5" fill="#fbc93d"/><path d="M10.5 408 L9.5 413 L12.5 411 L15.5 413 L14.5 408 Z" fill="#f26b4a"/>
<rect x="17" y="409" width="5" height="1" fill="#888"/>
<rect x="10" y="416" width="12" height="1" fill="#888"/>
<path d="M5 441 L16 435.5 L27 441 L16 446.5 Z" fill="#2a77c4"/><path d="M5 436.5 L16 431 L27 436.5 L16 442 Z" fill="#3d93e6"/><path d="M5 432.5 L16 427 L27 432.5 L16 438 Z" fill="#62b0f2"/>
<path d="M7.5 455.0 H19 L23.5 459.5 V475.5 H7.5 Z" fill="#fff" stroke="#666" stroke-width="1" stroke-linejoin="round"/><path d="M19 455.0 L23.5 459.5 H19 Z" fill="#666"/>
<circle cx="12" cy="462.5" r="3.3" fill="#fbc93d"/><path d="M13.5 464 L17.5 457.5 L21.5 464 Z" fill="#5cb13a"/><rect x="14" y="458" width="4" height="4" fill="#3d93e6"/>
<text x="8.5" y="474.5" font-size="9" fill="#333" class="sf">T</text>
<rect x="16" y="469.5" width="6" height="1" fill="#888"/>
<rect x="16" y="472.5" width="6" height="1" fill="#888"/>
<path d="M19.5 499 C17 495.5 14 492 14 488.5 A6.3 6.3 0 0 1 26.6 488.5 C26.6 492 23.5 495.5 19.5 499 Z" fill="none" stroke="#a0a0a0" stroke-width="2.8"/>
<path d="M12.5 504 C9 499 6 495.5 6 491.5 A6.5 6.5 0 0 1 19 491.5 C19 495.5 16 499 12.5 504 Z" fill="#3d93e6" stroke="#f0f0f0" stroke-width="1"/><circle cx="12.5" cy="491.5" r="2.4" fill="#fff"/>
<rect x="7" y="511" width="5" height="5" fill="#e8484a" stroke="#3d93e6" stroke-width="0.8" />
<path d="M9.5 516 V532 M9.5 520 H17 M9.5 526 H17 M9.5 532 H17" stroke="#888" stroke-width="1" fill="none"/>
<rect x="17.5" y="517.5" width="5" height="5" fill="#fbc93d" stroke="#3d93e6" stroke-width="0.8" />
<rect x="17.5" y="523.5" width="5" height="5" fill="#fbc93d" stroke="#3d93e6" stroke-width="0.8" />
<rect x="17.5" y="529.5" width="5" height="5" fill="#fbc93d" stroke="#3d93e6" stroke-width="0.8" />
<circle cx="28" cy="534" r="1.8" fill="#5cb13a"/>
<path d="M14.73 555.93 L12.33 558.33 A3.3 3.3 0 0 1 7.67 553.67 L13.67 547.67 A3.3 3.3 0 0 1 19.29 550.29" fill="none" stroke="#f5a623" stroke-width="3.4"/>
<path d="M18.27 543.07 L20.67 540.67 A3.3 3.3 0 0 1 25.33 545.33 L19.33 551.33 A3.3 3.3 0 0 1 13.71 548.71" fill="none" stroke="#9a9a9a" stroke-width="3.4"/>
<rect x="3" y="565" width="27" height="1" fill="#c9c9c9"/>
<path d="M6 584 L19 571 H26.5 V578.5 L13.5 591.5 Z" fill="#3d93e6"/><path d="M9 584 L19.5 573.5 L24 578 L13.5 588.5 Z" fill="#f5cd7c"/><circle cx="22.5" cy="575" r="1.8" fill="#fff"/>
<path d="M12.5 596.25 L15.5 599.75 L18.5 596.25" fill="none" stroke="#333" stroke-width="1.5"/><path d="M12.5 601.25 L15.5 604.75 L18.5 601.25" fill="none" stroke="#333" stroke-width="1.5"/>
<defs><filter id="shd" x="-10%" y="-10%" width="130%" height="130%"><feGaussianBlur stdDeviation="2.5"/></filter></defs>
<rect x="440" y="231" width="210" height="64" fill="#000" rx="4" opacity="0.35" filter="url(#shd)"/>
<rect x="438" y="228.8" width="209" height="64.2" fill="#f3f3f3" rx="4" />
<rect x="442" y="233" width="201" height="27.5" fill="#f7dfa5" rx="2" />
<text x="458.5" y="251.5" font-size="12.5" fill="#1a1a1a" stroke="#1a1a1a" stroke-width="0.15" textLength="181.5" lengthAdjust="spacingAndGlyphs" >Trust this document one time only</text>
<text x="458.5" y="278.5" font-size="12.5" fill="#1a1a1a" stroke="#1a1a1a" stroke-width="0.15" textLength="143.5" lengthAdjust="spacingAndGlyphs" >Trust this document always</text>
<!-- engine -->
<defs>
<radialGradient id="convg" cx="0.55" cy="0.55" r="0.62" fx="0.68" fy="0.62">
 <stop offset="0" stop-color="#f4f4ff"/><stop offset="0.3" stop-color="#dcdcf4"/><stop offset="0.65" stop-color="#a6a6c8"/><stop offset="0.9" stop-color="#6c6c90"/><stop offset="1" stop-color="#8a8aac"/></radialGradient>
<linearGradient id="convtop" x1="0" y1="0" x2="0" y2="1">
 <stop offset="0" stop-color="#30304a" stop-opacity="0.55"/><stop offset="0.45" stop-color="#30304a" stop-opacity="0"/></linearGradient>
<linearGradient id="flangeg" x1="0" y1="0" x2="1" y2="0.15">
 <stop offset="0" stop-color="#b4b4d4"/><stop offset="0.12" stop-color="#a4a4c4"/><stop offset="0.35" stop-color="#9494b6"/><stop offset="0.7" stop-color="#b0b0d0"/><stop offset="1" stop-color="#c8c8e6"/></linearGradient>
<radialGradient id="torusdark" cx="0.5" cy="0.5" r="0.5">
 <stop offset="0" stop-color="#505078" stop-opacity="0.75"/><stop offset="1" stop-color="#505078" stop-opacity="0"/></radialGradient>
<radialGradient id="torusbright" cx="0.5" cy="0.5" r="0.5">
 <stop offset="0" stop-color="#ffffff" stop-opacity="0.9"/><stop offset="1" stop-color="#ffffff" stop-opacity="0"/></radialGradient>
<linearGradient id="torusg" x1="0" y1="0" x2="1" y2="0">
 <stop offset="0" stop-color="#b8b8da"/><stop offset="0.25" stop-color="#d2d2ee"/><stop offset="0.55" stop-color="#b0b0d2"/><stop offset="0.85" stop-color="#e6e6fa"/><stop offset="1" stop-color="#c0c0de"/></linearGradient>
<linearGradient id="ringg" x1="0" y1="0" x2="1" y2="0.1">
 <stop offset="0" stop-color="#a0a0c2"/><stop offset="1" stop-color="#bcbcdc"/></linearGradient>
<linearGradient id="cylg" x1="0" y1="0" x2="1" y2="0">
 <stop offset="0" stop-color="#3c3c52"/><stop offset="0.35" stop-color="#6a6a8c"/><stop offset="0.7" stop-color="#a8a8c8"/><stop offset="1" stop-color="#c4c4e2"/></linearGradient>
<linearGradient id="drumg" x1="0" y1="0" x2="1" y2="0">
 <stop offset="0" stop-color="#24242e"/><stop offset="0.6" stop-color="#3a3a4a"/><stop offset="1" stop-color="#20202a"/></linearGradient>
</defs>
<path d="M382 344 L452 328 L468 330 L468 528 L454 521 L422 538 L361 536 L358 500 L357 475 L352 450 L345 442 L341 410 L344 392 L352 371 L365 354 Z" fill="#30303c"/>
<path d="M352 420 L402 428 L401 476 L360 469 Z" fill="#262630"/>
<path d="M362 473 L401 479 L452 488 L452 510 L360 498 Z" fill="#363644"/>
<path d="M362 502 L454 513 L454 521 L422 537 L362 534 Z" fill="#3c3c4a"/>
<path d="M384 343 L365 353 L352 371 L344 392 L341 410 L345 442 L352 450 L356.7 475 L358 500 L361.3 535" fill="none" stroke="#8c8cac" stroke-width="7" stroke-linejoin="round"/>
<path d="M388 346 L369 357 L357 374 L349 394 L346 410 L350 440 L357 449 L361.5 475 L363 500 L366 534" fill="none" stroke="#5c5c74" stroke-width="1.2"/>
<circle cx="375" cy="350" r="1.4" fill="#24242e"/>
<circle cx="357" cy="370" r="1.4" fill="#24242e"/>
<circle cx="349" cy="392" r="1.4" fill="#24242e"/>
<circle cx="345" cy="412" r="1.4" fill="#24242e"/>
<circle cx="348" cy="436" r="1.4" fill="#24242e"/>
<circle cx="355" cy="455" r="1.4" fill="#24242e"/>
<circle cx="359" cy="478" r="1.4" fill="#24242e"/>
<circle cx="361" cy="500" r="1.4" fill="#24242e"/>
<circle cx="363" cy="520" r="1.4" fill="#24242e"/>
<path d="M356 422 L404 429 M360 470 L402 477 M361 500 L454 512" stroke="#9494b4" stroke-width="2.2"/>
<path d="M357 425 L403 432 M361 473 L402 480 M361 503 L454 515" stroke="#1c1c24" stroke-width="1"/>
<ellipse cx="462" cy="428" rx="40" ry="96" transform="rotate(6 462 428)" fill="url(#drumg)"/>
<path d="M440 345 Q418 420 440 520" fill="none" stroke="#6c6c88" stroke-width="1.5"/>
<path d="M386 340 L452 327 L456 334 L390 348 Z" fill="#5a5a72"/>
<path d="M386 339.5 L452 326.5" stroke="#9a9ab8" stroke-width="2"/>
<path d="M392 347 Q380 348 378 356 Q368 358 364 366 Q370 374 366 382 Q358 386 356 396 L360 410 L400 414 L410 352 Z" fill="#42425a"/>
<path d="M392 347 Q380 348 378 356 Q368 358 364 366 Q370 374 366 382 Q358 386 356 396" fill="none" stroke="#d4d4ee" stroke-width="2.2" stroke-linecap="round"/>
<path d="M392 347 L428 346 L400 410 L365 405 Z" fill="#4c4c60" stroke="#a0a0c0" stroke-width="1.4" stroke-linejoin="round"/>
<path d="M398 355 L418 354 L396 400 L377 397 Z" fill="#3a3a4a" stroke="#22222c" stroke-width="0.8"/>
<circle cx="396.3" cy="353.0" r="2.3" fill="#3c5060" stroke="#15151c" stroke-width="0.9"/><circle cx="395.7" cy="352.4" r="0.9" fill="#8fa6b8"/>
<circle cx="411.6" cy="348.4" r="2.3" fill="#3c5060" stroke="#15151c" stroke-width="0.9"/><circle cx="411.0" cy="347.8" r="0.9" fill="#8fa6b8"/>
<circle cx="424.1" cy="352.3" r="2.3" fill="#3c5060" stroke="#15151c" stroke-width="0.9"/><circle cx="423.5" cy="351.7" r="0.9" fill="#8fa6b8"/>
<circle cx="389.4" cy="365.6" r="2.3" fill="#3c5060" stroke="#15151c" stroke-width="0.9"/><circle cx="388.8" cy="365.0" r="0.9" fill="#8fa6b8"/>
<circle cx="416.8" cy="365.1" r="2.3" fill="#3c5060" stroke="#15151c" stroke-width="0.9"/><circle cx="416.2" cy="364.5" r="0.9" fill="#8fa6b8"/>
<circle cx="375.7" cy="389.6" r="2.3" fill="#3c5060" stroke="#15151c" stroke-width="0.9"/><circle cx="375.1" cy="389.0" r="0.9" fill="#8fa6b8"/>
<circle cx="368.8" cy="402.1" r="2.3" fill="#3c5060" stroke="#15151c" stroke-width="0.9"/><circle cx="368.2" cy="401.5" r="0.9" fill="#8fa6b8"/>
<circle cx="380.3" cy="406.7" r="2.3" fill="#3c5060" stroke="#15151c" stroke-width="0.9"/><circle cx="379.7" cy="406.1" r="0.9" fill="#8fa6b8"/>
<circle cx="394.9" cy="403.3" r="2.3" fill="#3c5060" stroke="#15151c" stroke-width="0.9"/><circle cx="394.3" cy="402.7" r="0.9" fill="#8fa6b8"/>
<circle cx="382.0" cy="378.0" r="2.3" fill="#3c5060" stroke="#15151c" stroke-width="0.9"/><circle cx="381.4" cy="377.4" r="0.9" fill="#8fa6b8"/>
<path d="M396 396 L405 396 L408 500 L399 500 Z" fill="#4a4a5e"/>
<path d="M401.5 396 L404 500" stroke="#a8a8c8" stroke-width="1.4"/>
<ellipse cx="490" cy="426" rx="66" ry="110" transform="rotate(6 490 426)" fill="#7a7a9a"/>
<path d="M392 382 L423 378 L428 380 L428 392 L396 398 A8 8 0 0 1 392 382 Z" fill="#3a3a4c" stroke="#b0b0d0" stroke-width="1.2"/>
<path d="M423 378 L437 375 L441 380 L440 391 L428 392 Z" fill="#c6c6e2"/><path d="M428 381 L440 379" stroke="#eeeeff" stroke-width="1.5"/>
<path d="M388 489 L420 486 L425 492 L425 496 L392 500 A6 6 0 0 1 388 489 Z" fill="#3a3a4c" stroke="#a8a8c8" stroke-width="1.1"/>
<path d="M420 486 L438 486 L440 499 L424 498 Z" fill="#b8b8d8"/><path d="M424 489 L438 489" stroke="#ececff" stroke-width="1.4"/>
<path d="M423 507 L430 511 L427 517" fill="none" stroke="#c0c0dc" stroke-width="2.4"/>
<ellipse cx="496" cy="424.5" rx="66" ry="110" transform="rotate(6 496 424.5)" fill="url(#flangeg)"/>
<path d="M468 334 Q500 318 532 334 Q552 350 558 382 Q548 356 526 340 Q500 326 468 334 Z" fill="#15151d"/>
<ellipse cx="499" cy="425" rx="57.5" ry="96" transform="rotate(6 499 425)" fill="url(#ringg)" stroke="#55557a" stroke-width="0.8"/>
<ellipse cx="499" cy="425" rx="50" ry="84" transform="rotate(6 499 425)" fill="none" stroke="#6a6a8c" stroke-width="0.8"/>
<circle cx="475.7" cy="344.6" r="2.5" fill="#3c5060" stroke="#15151c" stroke-width="0.9"/><circle cx="475.1" cy="344.0" r="0.9" fill="#8fa6b8"/>
<circle cx="495.4" cy="335.0" r="2.5" fill="#3c5060" stroke="#15151c" stroke-width="0.9"/><circle cx="494.8" cy="334.4" r="0.9" fill="#8fa6b8"/>
<circle cx="515.6" cy="339.3" r="2.5" fill="#3c5060" stroke="#15151c" stroke-width="0.9"/><circle cx="515.0" cy="338.7" r="0.9" fill="#8fa6b8"/>
<circle cx="458.2" cy="368.0" r="2.5" fill="#3c5060" stroke="#15151c" stroke-width="0.9"/><circle cx="457.6" cy="367.4" r="0.9" fill="#8fa6b8"/>
<circle cx="447.2" cy="402.0" r="2.5" fill="#3c5060" stroke="#15151c" stroke-width="0.9"/><circle cx="446.6" cy="401.4" r="0.9" fill="#8fa6b8"/>
<circle cx="445.5" cy="440.2" r="2.5" fill="#3c5060" stroke="#15151c" stroke-width="0.9"/><circle cx="444.9" cy="439.6" r="0.9" fill="#8fa6b8"/>
<circle cx="452.3" cy="475.7" r="2.5" fill="#3c5060" stroke="#15151c" stroke-width="0.9"/><circle cx="451.7" cy="475.1" r="0.9" fill="#8fa6b8"/>
<circle cx="467.8" cy="500.7" r="2.5" fill="#3c5060" stroke="#15151c" stroke-width="0.9"/><circle cx="467.2" cy="500.1" r="0.9" fill="#8fa6b8"/>
<circle cx="487.0" cy="513.5" r="2.5" fill="#3c5060" stroke="#15151c" stroke-width="0.9"/><circle cx="486.4" cy="512.9" r="0.9" fill="#8fa6b8"/>
<circle cx="507.0" cy="511.8" r="2.5" fill="#3c5060" stroke="#15151c" stroke-width="0.9"/><circle cx="506.4" cy="511.2" r="0.9" fill="#8fa6b8"/>
<path d="M497 342 A50 82 0 0 0 497 506 L514 492.5 A43.5 72.5 0 0 1 514 347.5 Z" fill="url(#cylg)"/>
<path d="M497 342 A50 82 0 0 1 547 424 L557.5 420 A43.5 72.5 0 0 0 514 347.5 Z" fill="#8888aa"/>
<ellipse cx="514" cy="420" rx="43.5" ry="72.5" fill="#a8a8cc" stroke="#50507a" stroke-width="0.8"/>
<ellipse cx="515" cy="421" rx="38" ry="62" fill="url(#torusg)" stroke="#60608a" stroke-width="0.7"/>
<ellipse cx="518" cy="386" rx="26" ry="24" fill="url(#torusdark)"/>
<ellipse cx="540" cy="432" rx="14" ry="30" fill="url(#torusbright)"/>
<ellipse cx="520" cy="468" rx="20" ry="14" fill="url(#torusbright)" opacity="0.6"/>
<path d="M529 362 C526 375 520 385 508 392" fill="none" stroke="#70709a" stroke-width="0.8"/>
<path d="M509 459 C507 470 506 478 504 488" fill="none" stroke="#70709a" stroke-width="0.8"/>
<ellipse cx="514.6" cy="421.3" rx="19" ry="29" fill="#c0c0de" stroke="#5a5a7a" stroke-width="0.8"/>
<ellipse cx="515" cy="424" rx="13.7" ry="22.5" fill="#cacae6" stroke="#5a5a7a" stroke-width="0.8"/>
<ellipse cx="516" cy="425.5" rx="10.5" ry="14.5" fill="#b4b4d4" stroke="#4a4a66" stroke-width="0.8"/>
<path d="M507 427 A9.5 13 0 0 0 524 436 A10 12 0 0 1 507 427 Z" fill="#e8e8fa"/>
<path d="M509 420 A9 12 0 0 1 524 416 L522 420 Z" fill="#7a7a9a"/>
<path d="M516 419.2 L526.5 419.2 L526.5 432.2 L516 432.2 Z" fill="#6a6a88"/>
<path d="M516 426 L526.5 426 L526.5 432.2 L516 432.2 Z" fill="#a8a8c8"/>
<ellipse cx="516" cy="425.7" rx="3.5" ry="6.5" fill="#8888a8"/>
<ellipse cx="526.5" cy="425.7" rx="4.3" ry="6.5" fill="#d4d4ee" stroke="#4a4a66" stroke-width="0.6"/>
<path d="M553 357 L562 358 L563 370 L556 370 Z" fill="#b0b0d0"/>
<!-- bottom -->
<rect x="32" y="580" width="857" height="31" fill="#f0f0f0" />
<rect x="32" y="580" width="857" height="1" fill="#fafafa"/>
<rect x="0" y="611" width="890" height="1" fill="#bdbdbd"/>
<rect x="34" y="584" width="10" height="16" fill="url(#grip)" /><path d="M35.5 601 V608 M41.5 601 L38 604.5 L41.5 608" fill="none" stroke="#222" stroke-width="1.3"/>
<rect x="52.1" y="584.2" width="2.8" height="3.5" fill="#8a8a8a" transform="rotate(0 53.5 591)"/><rect x="52.1" y="584.2" width="2.8" height="3.5" fill="#8a8a8a" transform="rotate(45 53.5 591)"/><rect x="52.1" y="584.2" width="2.8" height="3.5" fill="#8a8a8a" transform="rotate(90 53.5 591)"/><rect x="52.1" y="584.2" width="2.8" height="3.5" fill="#8a8a8a" transform="rotate(135 53.5 591)"/><rect x="52.1" y="584.2" width="2.8" height="3.5" fill="#8a8a8a" transform="rotate(180 53.5 591)"/><rect x="52.1" y="584.2" width="2.8" height="3.5" fill="#8a8a8a" transform="rotate(225 53.5 591)"/><rect x="52.1" y="584.2" width="2.8" height="3.5" fill="#8a8a8a" transform="rotate(270 53.5 591)"/><rect x="52.1" y="584.2" width="2.8" height="3.5" fill="#8a8a8a" transform="rotate(315 53.5 591)"/><circle cx="53.5" cy="591" r="4.8" fill="#8a8a8a"/><circle cx="53.5" cy="591" r="2.2" fill="#f0f0f0"/>
<rect x="61.1" y="593.2" width="2.8" height="3.5" fill="#f5a623" transform="rotate(0 62.5 600)"/><rect x="61.1" y="593.2" width="2.8" height="3.5" fill="#f5a623" transform="rotate(45 62.5 600)"/><rect x="61.1" y="593.2" width="2.8" height="3.5" fill="#f5a623" transform="rotate(90 62.5 600)"/><rect x="61.1" y="593.2" width="2.8" height="3.5" fill="#f5a623" transform="rotate(135 62.5 600)"/><rect x="61.1" y="593.2" width="2.8" height="3.5" fill="#f5a623" transform="rotate(180 62.5 600)"/><rect x="61.1" y="593.2" width="2.8" height="3.5" fill="#f5a623" transform="rotate(225 62.5 600)"/><rect x="61.1" y="593.2" width="2.8" height="3.5" fill="#f5a623" transform="rotate(270 62.5 600)"/><rect x="61.1" y="593.2" width="2.8" height="3.5" fill="#f5a623" transform="rotate(315 62.5 600)"/><circle cx="62.5" cy="600" r="4.8" fill="#f5a623"/><circle cx="62.5" cy="600" r="2.2" fill="#f0f0f0"/>
<path d="M75.75 592.9 L78.5 596.1 L81.25 592.9" fill="none" stroke="#333" stroke-width="1.5"/>
<rect x="85" y="583" width="1" height="25" fill="#cfcfcf"/>
<path d="M90.0 590.75 L93 594.25 L96.0 590.75" fill="none" stroke="#333" stroke-width="1.5"/><path d="M90.0 595.75 L93 599.25 L96.0 595.75" fill="none" stroke="#333" stroke-width="1.5"/>
<rect x="228" y="584" width="10" height="16" fill="url(#grip)" /><path d="M229.5 601 V608 M235.5 601 L232 604.5 L235.5 608" fill="none" stroke="#222" stroke-width="1.3"/>
<circle cx="253" cy="596.2" r="10.7" fill="#f5f5f5" stroke="#b0b0b0" stroke-width="1"/>
<path d="M249 591 V601.5 M257.5 591 L252.5 596.2 L257.5 601.5" fill="none" stroke="#7cbcea" stroke-width="1.8"/>
<circle cx="281" cy="596.2" r="10.7" fill="#f5f5f5" stroke="#b0b0b0" stroke-width="1"/>
<path d="M283.5 591 L278.5 596.2 L283.5 601.5" fill="none" stroke="#7cbcea" stroke-width="1.8"/>
<rect x="297.5" y="584.5" width="94" height="22" fill="#f7f7f7" rx="3" stroke="#c8c8c8" stroke-width="1" />
<text x="368" y="603" font-size="13" fill="#555" stroke="#555" stroke-width="0.15" >1</text>
<path d="M380 592 L375.5 605.5" stroke="#666" stroke-width="1.1"/>
<text x="381.5" y="598" font-size="10" fill="#555" stroke="#555" stroke-width="0.15" >1</text>
<circle cx="407" cy="596.2" r="10.7" fill="#f5f5f5" stroke="#b0b0b0" stroke-width="1"/>
<path d="M404.5 591 L409.5 596.2 L404.5 601.5" fill="none" stroke="#7cbcea" stroke-width="1.8"/>
<circle cx="435.5" cy="596.2" r="10.7" fill="#f5f5f5" stroke="#b0b0b0" stroke-width="1"/>
<path d="M431.5 591 L436.5 596.2 L431.5 601.5 M440 591 V601.5" fill="none" stroke="#7cbcea" stroke-width="1.8"/>
<rect x="451" y="583" width="1" height="25" fill="#cfcfcf"/>
<circle cx="466.3" cy="596" r="11" fill="#f7f7f7" stroke="#8f8f8f" stroke-width="1"/>
<path d="M460.5 596 H472 M465 591 L460.5 596 L465 601" fill="none" stroke="#5cb13a" stroke-width="2.2"/>
<path d="M483.0 590.75 L486 594.25 L489.0 590.75" fill="none" stroke="#333" stroke-width="1.5"/><path d="M483.0 595.75 L486 599.25 L489.0 595.75" fill="none" stroke="#333" stroke-width="1.5"/>
<rect x="494.5" y="584" width="10" height="16" fill="url(#grip)" /><path d="M496.0 601 V608 M502.0 601 L498.5 604.5 L502.0 608" fill="none" stroke="#222" stroke-width="1.3"/>
<path d="M510.5 586.5 H521 L525.5 591 V605.5 H510.5 Z" fill="#fff" stroke="#666" stroke-width="1" stroke-linejoin="round"/><path d="M521 586.5 L525.5 591 H521 Z" fill="#666"/>
<rect x="532.5" y="582.5" width="27" height="26.5" fill="#e6d4a2" rx="2" stroke="#cbbb92" stroke-width="1" />
<rect x="539.5" y="584.5" width="15" height="11" fill="#fff" stroke="#666" stroke-width="1" />
<path d="M539.5 597.5 H551 L554.5 601 V606.5 H539.5 Z" fill="#fff" stroke="#666" stroke-width="1" stroke-linejoin="round"/><path d="M551 597.5 L554.5 601 H551 Z" fill="#555"/>
<path d="M563.0 588.5 H570.0 L573.0 591.5 V602.0 H563.0 Z" fill="#fafafa" stroke="#c5c5c5" stroke-width="1" stroke-linejoin="round"/><path d="M570.0 588.5 L573.0 591.5 H570.0 Z" fill="#c5c5c5"/>
<path d="M575.5 588.5 H582.5 L585.5 591.5 V602.0 H575.5 Z" fill="#fafafa" stroke="#c5c5c5" stroke-width="1" stroke-linejoin="round"/><path d="M582.5 588.5 L585.5 591.5 H582.5 Z" fill="#c5c5c5"/>
<path d="M591.0 590.75 L594 594.25 L597.0 590.75" fill="none" stroke="#333" stroke-width="1.5"/><path d="M591.0 595.75 L594 599.25 L597.0 595.75" fill="none" stroke="#333" stroke-width="1.5"/>
<rect x="601.5" y="584" width="10" height="16" fill="url(#grip)" /><path d="M603.0 601 V608 M609.0 601 L605.5 604.5 L609.0 608" fill="none" stroke="#222" stroke-width="1.3"/>
<rect x="613.5" y="584.5" width="81" height="22.5" fill="#fff" rx="2" stroke="#a9a9a9" stroke-width="1" />
<text x="618" y="600" font-size="13" fill="#1a1a1a" stroke="#1a1a1a" stroke-width="0.15" textLength="36" lengthAdjust="spacingAndGlyphs" >78.79%</text>
<path d="M684.0 593.75 L687 597.25 L690.0 593.75" fill="none" stroke="#333" stroke-width="1.5"/>
<rect x="697" y="583" width="1" height="25" fill="#cfcfcf"/>
<circle cx="713" cy="596.5" r="10.7" fill="#f7f7f7" stroke="#8f8f8f" stroke-width="1"/>
<rect x="707" y="595.5" width="12" height="2" fill="#3d93e6"/>
<rect x="729.5" y="593.8" width="99" height="2.8" fill="#bdbdbd" rx="1.4" />
<rect x="729.5" y="593.8" width="40" height="2.8" fill="#8a8a8a" rx="1.4" />
<circle cx="769" cy="595.2" r="9" fill="#f7f7f7" stroke="#6f6f6f" stroke-width="1"/><circle cx="769" cy="595.2" r="3.6" fill="#8a8a8a"/>
<path d="M834.0 590.75 L837 594.25 L840.0 590.75" fill="none" stroke="#333" stroke-width="1.5"/><path d="M834.0 595.75 L837 599.25 L840.0 595.75" fill="none" stroke="#333" stroke-width="1.5"/>
<rect x="845" y="584" width="10" height="16" fill="url(#grip)" /><path d="M846.5 601 V608 M852.5 601 L849 604.5 L852.5 608" fill="none" stroke="#222" stroke-width="1.3"/>
<path d="M869.5 590.75 L872.5 594.25 L875.5 590.75" fill="none" stroke="#333" stroke-width="1.5"/><path d="M869.5 595.75 L872.5 599.25 L875.5 595.75" fill="none" stroke="#333" stroke-width="1.5"/>
<rect x="878" y="580" width="11" height="31" fill="#e6e6e6" />
<path d="M880 582 L883.5 585.5 L887 582" fill="none" stroke="#333" stroke-width="1.3"/>
<rect x="880" y="587" width="7.5" height="1.3" fill="#333"/>
<!-- frame -->
<path fill-rule="evenodd" d="M0 0 H890 V612 H0 Z M7.5 0.5 H882.5 A7 7 0 0 1 889.5 7.5 V604.5 A7 7 0 0 1 882.5 611.5 H7.5 A7 7 0 0 1 0.5 604.5 V7.5 A7 7 0 0 1 7.5 0.5 Z" fill="#ececec"/>
<path d="M7.5 0.5 H882.5 A7 7 0 0 1 889.5 7.5 V604.5 A7 7 0 0 1 882.5 611.5 H7.5 A7 7 0 0 1 0.5 604.5 V7.5 A7 7 0 0 1 7.5 0.5 Z" fill="none" stroke="#b2b2b2" stroke-width="1"/>
</svg>
</body></html>
